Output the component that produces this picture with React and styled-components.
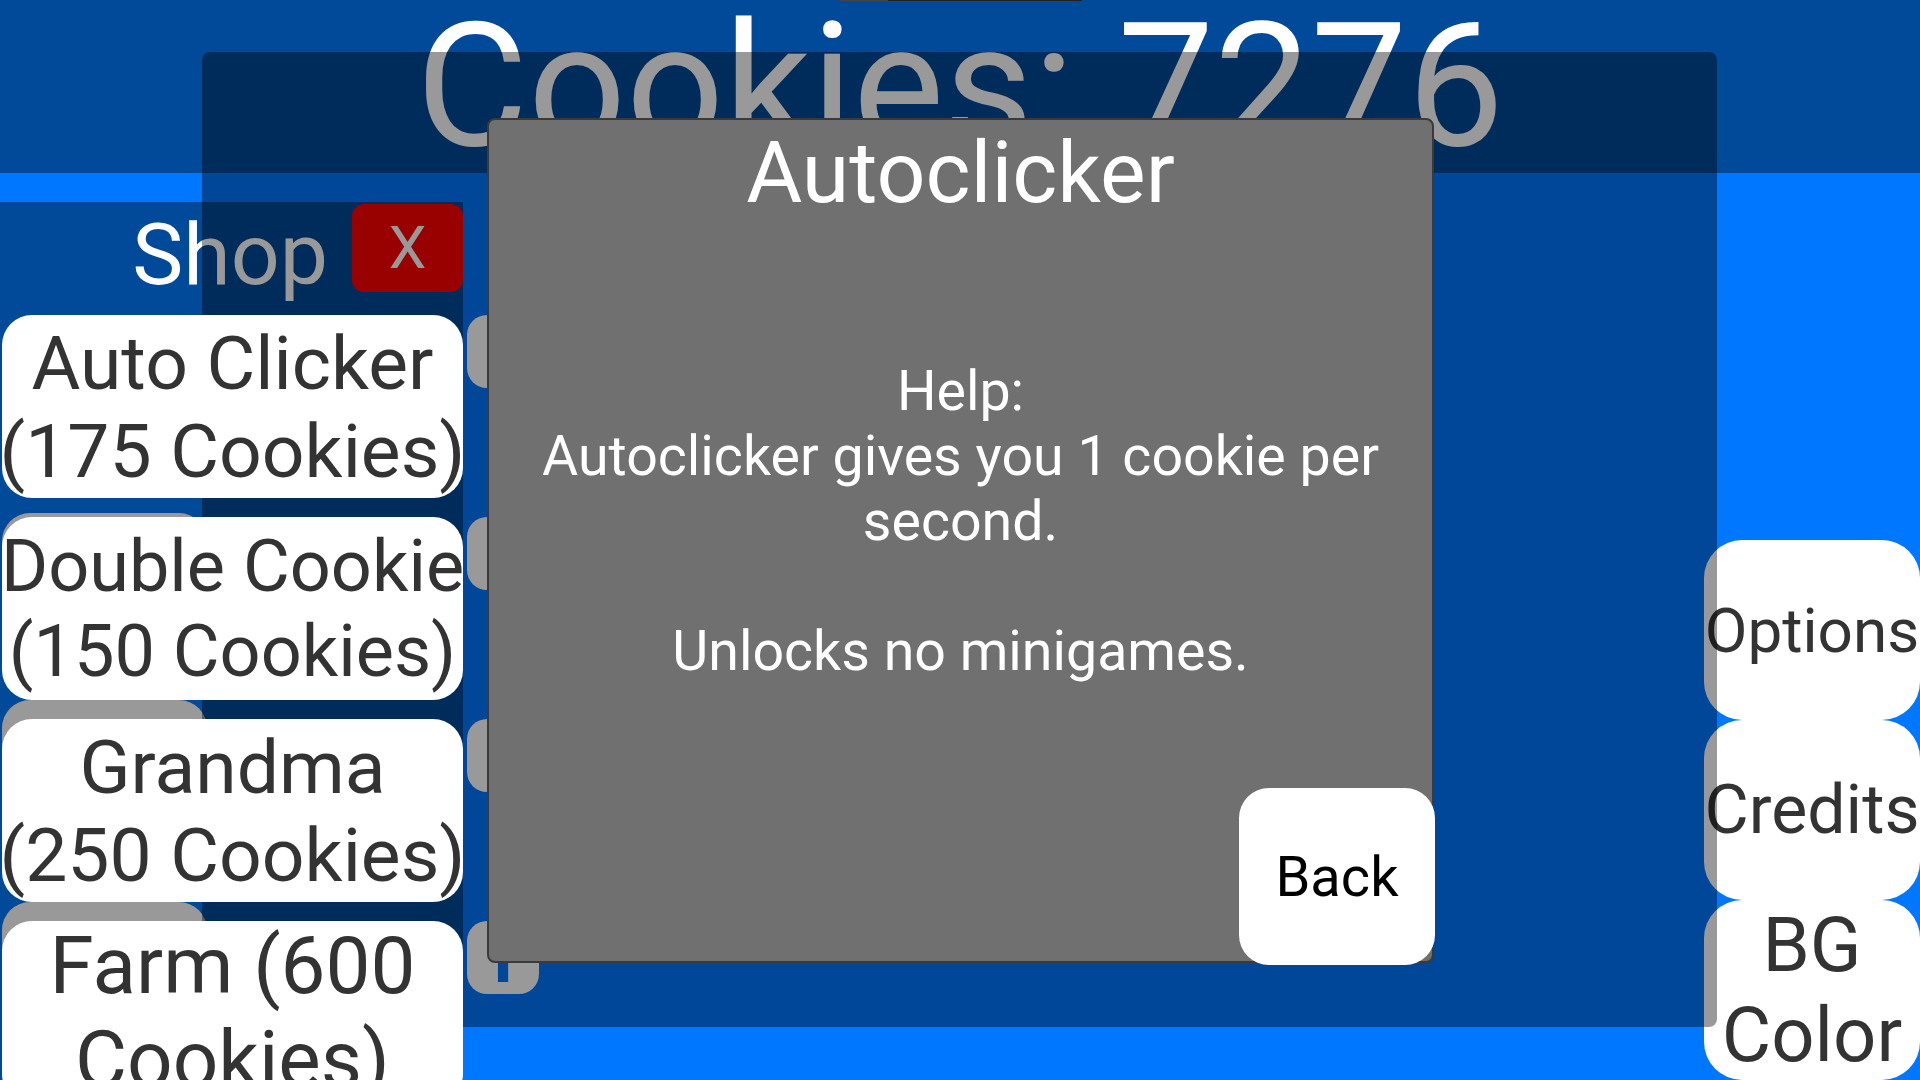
import styled, { createGlobalStyle } from "styled-components";

const GlobalStyle = createGlobalStyle`
  html, body {
    margin: 0;
    padding: 0;
  }

  body {
    background: #0077ff;
    font-family: Roboto, "Noto Sans", "Liberation Sans", sans-serif;
    overflow: hidden;
  }
`;

const Screen = styled.div`
  position: relative;
  width: 1920px;
  height: 1080px;
  overflow: hidden;
  background: #0077ff;
  display: flex;
  flex-direction: column;
`;

const Header = styled.header`
  position: relative;
  flex-shrink: 0;
  height: 173px;
  background: #004a99;
  display: flex;
  justify-content: center;
`;

// bottom edge of something sitting just above the viewport
const TopEdge = styled.div`
  position: absolute;
  top: 0;
  left: 840px;
  width: 242px;
  height: 1px;
  background: linear-gradient(to right, #444 0 48px, #222 48px);
`;

const Counter = styled.h1`
  margin: 0;
  font-size: 172px;
  font-weight: 400;
  line-height: 1;
  color: #fff;
  white-space: nowrap;
`;

const Main = styled.main`
  flex: 1;
  min-height: 0;
  display: flex;
  justify-content: space-between;
`;

const ShopPanel = styled.section`
  width: 463px;
  margin-top: 29px;
  background: #004a99;
  display: flex;
  flex-direction: column;
`;

const ShopHeader = styled.div`
  flex-shrink: 0;
  box-sizing: border-box;
  height: 113px;
  padding-top: 2px;
  display: flex;
  justify-content: flex-end;
  align-items: flex-start;
  gap: 24px;
`;

const ShopTitle = styled.h2`
  margin: 0;
  font-size: 86px;
  font-weight: 400;
  line-height: normal;
  color: #fff;
`;

const CloseButton = styled.button`
  width: 111px;
  height: 88px;
  padding: 0;
  border: none;
  border-radius: 12px;
  background: #ff0000;
  color: #fff;
  font-family: inherit;
  font-size: 60px;
  line-height: 1;
  display: flex;
  align-items: center;
  justify-content: center;
`;

const ShopList = styled.div`
  flex-shrink: 0;
  padding-left: 2px;
  display: flex;
  flex-direction: column;
  gap: 19px;
`;

const ShopRow = styled.div`
  position: relative;
  display: flex;
  gap: 4px;
`;

const Peek = styled.div`
  position: absolute;
  left: 0;
  top: ${(p) => -p.$offset}px;
  width: 205px;
  height: 80px;
  border-radius: 28px;
  background: #999;
`;

const ItemButton = styled.button`
  position: relative;
  z-index: 1;
  flex-shrink: 0;
  width: 461px;
  height: 183px;
  padding: 0;
  border: none;
  border-radius: 30px;
  background: #fff;
  color: #333;
  font-family: inherit;
  font-size: ${(p) => p.$size}px;
  line-height: normal;
  white-space: nowrap;
  text-align: center;
  display: flex;
  align-items: center;
  justify-content: center;
`;

const HelpButton = styled.button`
  flex-shrink: 0;
  width: 72px;
  height: 73px;
  padding: 0;
  border: none;
  border-radius: 20px;
  background: #fff;
  color: #0077ff;
  font-family: inherit;
  font-weight: 700;
  font-size: 72px;
  line-height: 64px;
  overflow: hidden;
  text-align: center;
`;

const SideMenu = styled.nav`
  align-self: flex-end;
  width: 216px;
  display: flex;
  flex-direction: column;
`;

const SideButton = styled.button`
  height: 180px;
  padding: 0;
  border: none;
  border-radius: 38px;
  background: #fff;
  color: #333;
  font-family: inherit;
  font-size: ${(p) => p.$size}px;
  line-height: normal;
  text-align: center;
`;

const Dimmer = styled.div`
  position: absolute;
  left: 202px;
  top: 52px;
  width: 1515px;
  height: 975px;
  border-radius: 8px;
  background: rgba(0, 0, 0, 0.4);
`;

const Modal = styled.div`
  position: absolute;
  left: 487px;
  top: 118px;
  box-sizing: border-box;
  width: 947px;
  height: 845px;
  border: 2px solid #3a3a3a;
  border-radius: 8px;
  background: #707070;
  color: #fff;
  display: flex;
  flex-direction: column;
  align-items: center;
`;

const ModalTitle = styled.h2`
  margin: 2px 0 0;
  font-size: 86px;
  font-weight: 400;
  line-height: normal;
`;

const ModalText = styled.p`
  margin: 136px 0 0;
  font-size: 55.5px;
  line-height: normal;
  text-align: center;
`;

const BackButton = styled.button`
  margin-top: auto;
  margin-right: -3px;
  margin-bottom: -4px;
  align-self: flex-end;
  width: 196px;
  height: 177px;
  padding: 0;
  border: none;
  border-radius: 30px;
  background: #fff;
  color: #000;
  font-family: inherit;
  font-size: 56px;
  line-height: normal;
`;

// labels are auto-fitted in the game, so each one has its own size
const items = [
  { name: "Auto Clicker", cost: "(175 Cookies)", size: 75, peek: null },
  { name: "Double Cookie", cost: "(150 Cookies)", size: 72, peek: 4 },
  { name: "Grandma", cost: "(250 Cookies)", size: 75, peek: 19 },
  { name: "Farm (600", cost: "Cookies)", size: 80, peek: 19 },
];

export default function App() {
  return (
    <>
      <GlobalStyle />
      <Screen>
        <Header>
          <TopEdge />
          <Counter>Cookies: 7276</Counter>
        </Header>

        <Main>
          <ShopPanel>
            <ShopHeader>
              <ShopTitle>Shop</ShopTitle>
              <CloseButton>X</CloseButton>
            </ShopHeader>
            <ShopList>
              {items.map((item) => (
                <ShopRow key={item.name}>
                  {item.peek !== null && <Peek $offset={item.peek} />}
                  <ItemButton $size={item.size}>
                    {item.name}
                    <br />
                    {item.cost}
                  </ItemButton>
                  <HelpButton>i</HelpButton>
                </ShopRow>
              ))}
            </ShopList>
          </ShopPanel>

          <SideMenu>
            <SideButton $size={62}>Options</SideButton>
            <SideButton $size={68}>Credits</SideButton>
            <SideButton $size={76}>BG Color</SideButton>
          </SideMenu>
        </Main>

        <Dimmer />

        <Modal>
          <ModalTitle>Autoclicker</ModalTitle>
          <ModalText>
            Help:
            <br />
            Autoclicker gives you 1 cookie per second.
            <br />
            <br />
            Unlocks no minigames.
          </ModalText>
          <BackButton>Back</BackButton>
        </Modal>
      </Screen>
    </>
  );
}
